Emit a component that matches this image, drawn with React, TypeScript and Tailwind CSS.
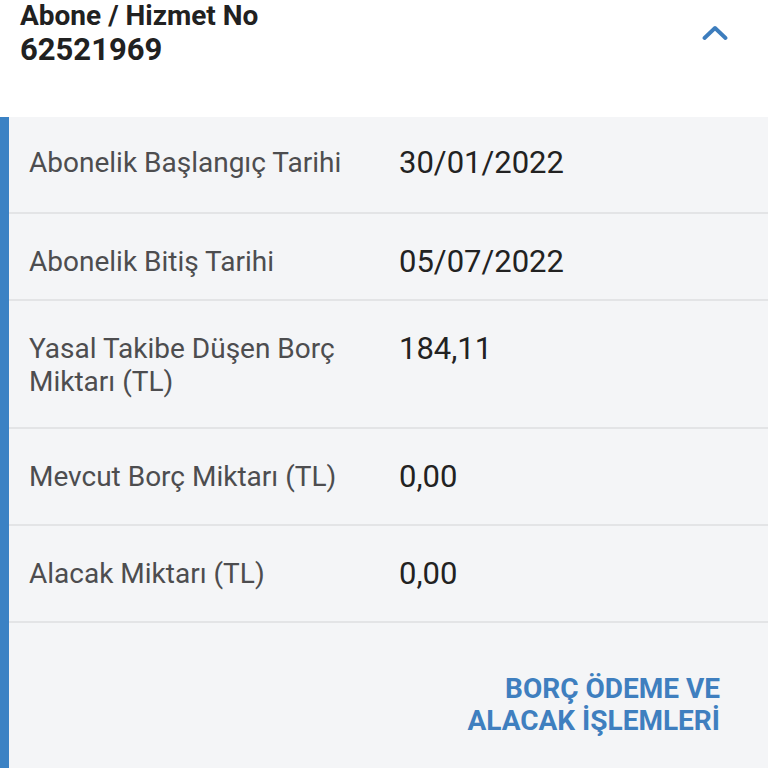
import React, { useState } from 'react';

type Row = { label: string; value: string; pad: string };

const rows: Row[] = [
  { label: 'Abonelik Başlangıç Tarihi', value: '30/01/2022', pad: 'pt-[29px] pb-[33px]' },
  { label: 'Abonelik Bitiş Tarihi', value: '05/07/2022', pad: 'pt-[31px] pb-[21px]' },
  { label: 'Yasal Takibe Düşen Borç Miktarı (TL)', value: '184,11', pad: 'pt-[31px] pb-[29px]' },
  { label: 'Mevcut Borç Miktarı (TL)', value: '0,00', pad: 'pt-[31px] pb-[31px]' },
  { label: 'Alacak Miktarı (TL)', value: '0,00', pad: 'pt-[31px] pb-[31px]' },
];

const App: React.FC = () => {
  const [open, setOpen] = useState(true);

  return (
    <div className="min-h-screen bg-white font-['Roboto',sans-serif]">
      {/* başlık */}
      <button
        onClick={() => setOpen(!open)}
        className="w-full h-[117px] flex items-start justify-between pl-5 pr-10 text-left"
      >
        <div className="-mt-[1px]">
          <div className="text-[28px] leading-[33px] font-bold text-[#212121]">
            Abone / Hizmet No
          </div>
          <div className="text-[31px] leading-[36px] font-bold text-[#212121]">
            62521969
          </div>
        </div>
        <svg
          width="26"
          height="16"
          viewBox="0 0 26 16"
          className={`mt-[25px] ${open ? '' : 'rotate-180'}`}
        >
          <path
            d="M2.5 13 L13 3 L23.5 13"
            fill="none"
            stroke="#3d7dbd"
            strokeWidth="3.8"
            strokeLinecap="round"
            strokeLinejoin="round"
          />
        </svg>
      </button>

      {open && (
        <div className="flex bg-[#f4f5f7]">
          <div className="w-[9px] bg-[#3b82c4] shrink-0" />
          <div className="flex-1">
            {rows.map((row) => (
              <div
                key={row.label}
                className={`grid grid-cols-[370px_1fr] pl-5 border-b-2 border-[#e3e4e6] ${row.pad}`}
              >
                <div className="text-[28px] leading-[33px] text-[#4d4d4f] pr-6">
                  {row.label}
                </div>
                <div className="text-[31px] leading-[33px] text-[#222222]">
                  {row.value}
                </div>
              </div>
            ))}
            <div className="flex justify-end pr-[48px] pt-[50px] pb-[40px]">
              <button className="text-right text-[28px] leading-[32px] font-bold text-[#3f7fbf]">
                BORÇ ÖDEME VE
                <br />
                ALACAK İŞLEMLERİ
              </button>
            </div>
          </div>
        </div>
      )}
    </div>
  );
};

export default App;
